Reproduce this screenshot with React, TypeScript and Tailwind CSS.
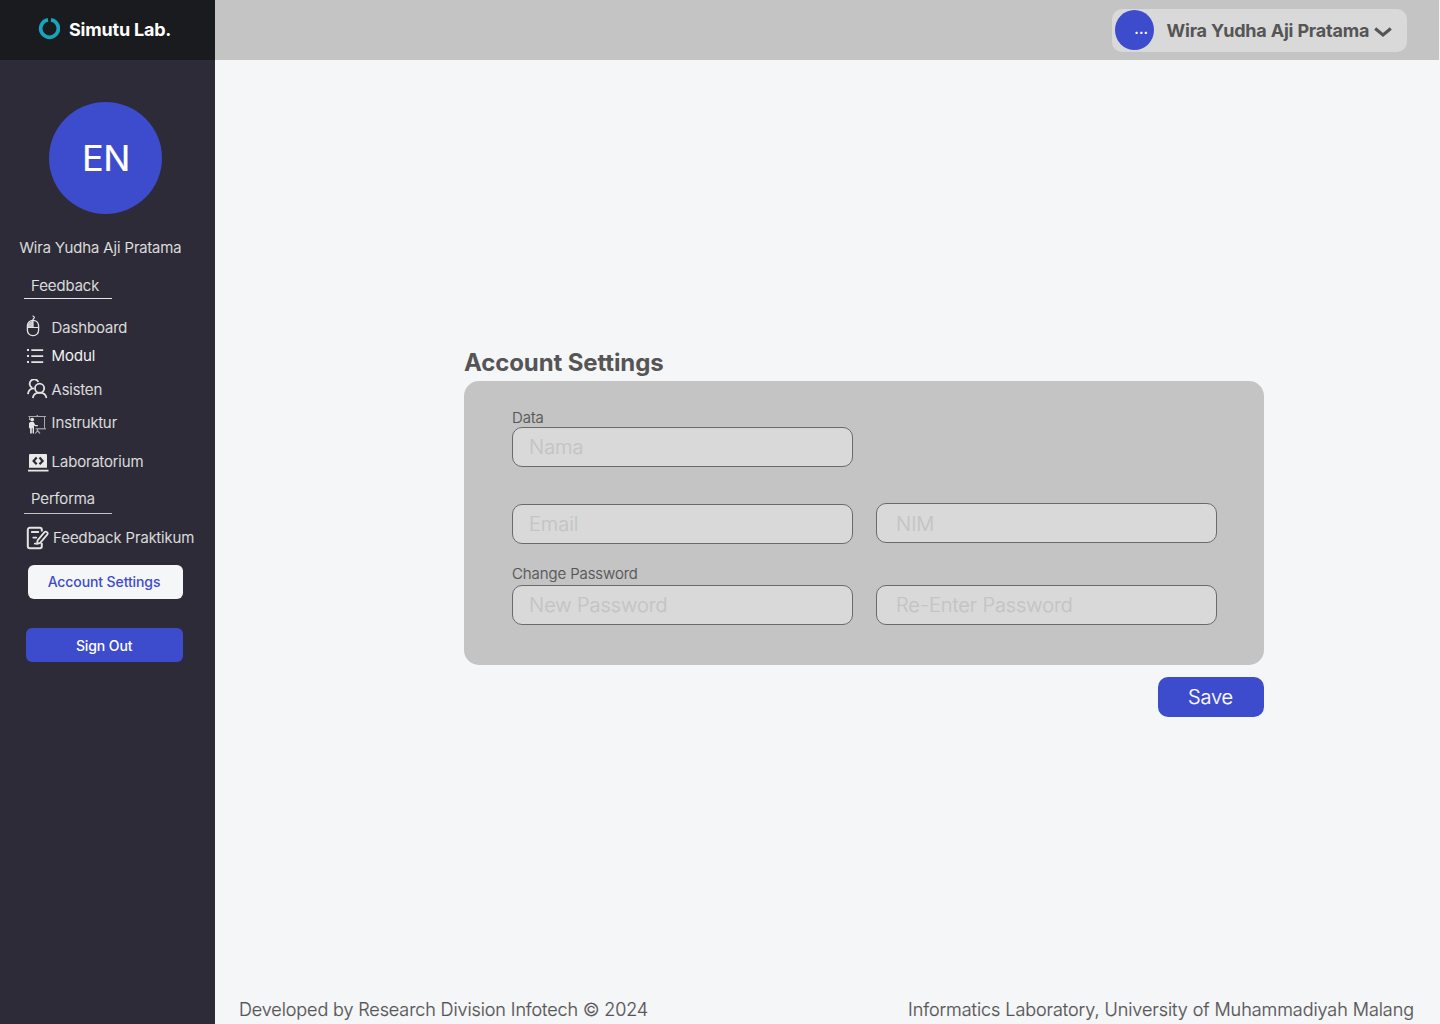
import type { ReactNode } from "react";

function LogoIcon() {
  return (
    <svg className="block h-[22px] w-[22px]" viewBox="0 0 22 22" fill="none">
      <path d="M12.500 2.060A8.800 8.800 0 1 1 9.500 2.060" transform="translate(.5 -.2)" stroke="#17a5bc" strokeWidth="3.700" />
    </svg>
  );
}

function MouseIcon() {
  return (
    <svg className="block h-[22px] w-[14px]" viewBox="0 0 14 22" fill="none" stroke="#e4e4e4">
      <path d="M1.500 11a5.500 5.200 0 0 1 5.500-5v6.500H1.500z" fill="#e4e4e4" fillOpacity=".85" stroke="none" />
      <rect x="1.400" y="5.300" width="11.200" height="15.400" rx="5.400" strokeWidth="1.300" />
      <path d="M1.400 12.500h11.200M7 5.500v7" strokeWidth="1.200" />
      <path d="M7 5.500V4.700c0-1.200 1.400-1 1.400-2.200C8.400 1.700 7.700 1.300 6.600 .7" strokeWidth="1.200" />
    </svg>
  );
}

function ListIcon() {
  return (
    <svg className="block h-[16px] w-[17px]" viewBox="0 0 17 16" fill="#e4e4e4">
      <path d="M0 1h2v2H0zM0 7h2v2H0zM0 13h2v2H0zM4.300 1.200H16.200V2.900H4.300zM4.300 7.200H16.200V8.900H4.300zM4.300 13.200H16.200V14.900H4.300z" />
    </svg>
  );
}

function PeopleIcon() {
  return (
    <svg className="block h-[20px] w-[21px]" viewBox="0 0 21 20" fill="none" stroke="#e4e4e4" strokeWidth="1.800">
      <circle cx="12.600" cy="9.300" r="4.600" />
      <path d="M5.800 19c.500-3.300 3.400-5.300 6.800-5.300s6.300 2 6.900 5.300" />
      <path d="M11.300 3A4.500 4.500 0 1 0 5.300 8.900" />
      <path d="M7 9.400C3.600 9.500 1.300 11.600.9 15.200" />
    </svg>
  );
}

function TeacherIcon() {
  return (
    <svg className="block h-[19px] w-[19px]" viewBox="0 0 19 19" fill="none" stroke="#a8a8ac">
      <path d="M.5 1.500H18M16.500 1.700V14M1.500 1.700V5" strokeWidth="1" />
      <path d="M7.500 13.800H18" strokeWidth="1.200" />
      <path d="M9.300 0v1.700" strokeWidth="1.500" />
      <path d="M9.500 14v1.500L7.300 18.500M9.500 15.500L12 18.500" strokeWidth="1.200" />
      <circle cx="4.200" cy="4.600" r="1.900" fill="#e4e4e4" stroke="none" />
      <path d="M2.100 7h3.500l1.700 2.900 2.500.2v1.200H7.100L6 10.500V18.500H4.600V13.300H3.800V18.500H2.100V13.200H1V8.200z" fill="#e4e4e4" stroke="none" />
    </svg>
  );
}

function LaptopIcon() {
  return (
    <svg className="block h-[19px] w-[21px]" viewBox="0 0 21 19">
      <path d="M1 2Q1 1 2 1H18Q19 1 19 2V14.700H1zM0 16.700H20.500V18.600H0z" fill="#e9e9e9" />
      <path d="M8.700 4.500L5.600 7.900l3.100 3.400M11.500 4.500l3.100 3.400-3.100 3.400" fill="none" stroke="#2c2b37" strokeWidth="2.200" />
    </svg>
  );
}

function NoteIcon() {
  return (
    <svg className="block h-[24px] w-[23px]" viewBox="0 0 23 24" fill="none" stroke="#e4e4e4" strokeWidth="2" strokeLinecap="round" strokeLinejoin="round">
      <g transform="translate(.8 .3)">
        <path d="M15 4.500V3.500A2 2 0 0 0 13 1.500H3A2 2 0 0 0 1 3.500V20A2 2 0 0 0 3 22H13A2 2 0 0 0 15 20V17.500" />
        <path d="M5 5.700H11.500M6.500 11.300H9.500M8 17.300H9" strokeWidth="1.800" />
        <path d="M10.800 14L17.700 5.900Q18.800 4.800 20.200 5.900Q21.500 7.100 20.400 8.300L13.400 16.500L10.200 17.600z" strokeWidth="1.800" />
      </g>
    </svg>
  );
}

function Item({ icon, label, className }: { icon: ReactNode; label: string; className: string }) {
  return (
    <a className={`flex h-5 items-center ${className}`}>
      <span className="flex w-[24.6px] shrink-0 items-center">{icon}</span>
      <span className="whitespace-nowrap">{label}</span>
    </a>
  );
}

function Field({ placeholder, className = "" }: { placeholder: string; className?: string }) {
  return (
    <input
      placeholder={placeholder}
      className={`block h-10 w-[341px] rounded-[10px] border border-[#6a6a6a] bg-[#d9d9d9] text-[20px] font-light leading-6 tracking-[-0.06px] outline-none [-webkit-text-stroke:0.2px] placeholder:text-[#c4c4c4] placeholder:opacity-100 ${className}`}
    />
  );
}

function Sidebar() {
  return (
    <aside className="flex w-[215px] shrink-0 flex-col bg-[#2c2b37] text-[15px] font-light leading-5 tracking-[-0.04px] text-[#e4e4e4] [-webkit-text-stroke:0.2px]">
      <div className="flex h-[60px] items-center bg-[#1a1b1e] pl-[38px] text-white [-webkit-text-stroke:0]">
        <span className="mb-[3px]"><LogoIcon /></span>
        <span className="ml-[9px] text-[18px] font-bold tracking-[-0.2px]">Simutu Lab.</span>
      </div>
      <div className="ml-[49.4px] mt-[42px] flex h-28 w-[113px] items-center justify-center rounded-[50%] bg-[#3d4bcd] text-[36px] font-normal tracking-[-0.5px] text-white">EN</div>
      <p className="ml-[19.4px] mt-6 whitespace-nowrap">Wira Yudha Aji Pratama</p>
      <h2 className="ml-6 mt-[17px] h-6 w-[88px] border-b border-[#e4e4e4] pl-[7px] pt-px">Feedback</h2>
      <nav className="flex flex-col pl-[27px]">
        <Item className="mt-[19px]" icon={<span className="-ml-[0.6px] mb-[5px]"><MouseIcon /></span>} label="Dashboard" />
        <Item className="mt-2 text-white" icon={<ListIcon />} label="Modul" />
        <Item className="mt-[14px]" icon={<span className="mb-[2px]"><PeopleIcon /></span>} label="Asisten" />
        <Item className="mt-[13px]" icon={<span className="ml-px mt-[3px]"><TeacherIcon /></span>} label="Instruktur" />
        <Item className="mt-[19px]" icon={<span className="ml-px"><LaptopIcon /></span>} label="Laboratorium" />
      </nav>
      <h2 className="ml-6 mt-4 h-[26px] w-[88px] border-b border-[#c4c4c8] pl-[7px] pt-px">Performa</h2>
      <a className="ml-[26px] mt-[14px] flex h-5 items-center gap-1 whitespace-nowrap tracking-normal">
        <NoteIcon />Feedback Praktikum
      </a>
      <button className="ml-7 mt-[17px] h-[34px] w-[155px] rounded-md bg-[#f5f6f8] pr-[3px] text-[14px] font-medium tracking-[-0.1px] text-[#3d4bcd] [-webkit-text-stroke:0]">Account Settings</button>
      <button className="ml-[26.400px] mt-[29px] h-[34px] w-[156.600px] rounded-md bg-[#3d4bcd] pr-px pt-px text-[14px] font-medium tracking-[-0.1px] text-white [-webkit-text-stroke:0]">Sign Out</button>
    </aside>
  );
}

export default function App() {
  return (
    <div className="flex h-[1024px] w-[1440px] overflow-hidden bg-[#f5f6f8] font-['Inter',sans-serif] text-[#555]">
      <Sidebar />
      <div className="flex flex-1 flex-col">
        <header className="mr-px flex h-[60px] items-center justify-end bg-[#c4c4c4] pr-8">
          <div className="flex h-[43px] w-[295px] items-center rounded-[10px] bg-[#d9d9d9] pl-[3px]">
            <span className="mb-px flex h-10 w-[39px] items-center justify-end rounded-[50%] bg-[#3d4bcd] pr-[6px] text-[15px] font-medium text-white">...</span>
            <span className="ml-[12.500px] whitespace-nowrap text-[18px] font-bold tracking-[-0.19px]">Wira Yudha Aji Pratama</span>
            <svg className="ml-[5px] mt-1 h-3 w-[18px]" viewBox="0 0 18 12" fill="none" stroke="#555" strokeWidth="3">
              <path d="M1.200 2.500L9 9L16.800 2.500" />
            </svg>
          </div>
        </header>
        <main className="ml-[249px] mt-[285px] w-[800px] flex-1">
          <h1 className="h-9 text-[24px] font-bold leading-[35px] tracking-[-0.12px]">Account Settings</h1>
          <form className="h-[284px] rounded-[15px] bg-[#c4c4c4] pl-12 pt-[27px]">
            <label className="block h-[19px] text-[15px] font-light leading-5 [-webkit-text-stroke:0.2px]">Data</label>
            <Field placeholder="Nama" className="pl-4" />
            <div className="mt-9 flex gap-[23px]">
              <Field placeholder="Email" className="mt-px pl-4" />
              <Field placeholder="NIM" className="pl-[19px] pt-[2px]" />
            </div>
            <label className="mt-[19px] block h-[22px] text-[15px] font-light leading-[22px] tracking-[-0.08px] [-webkit-text-stroke:0.2px]">Change Password</label>
            <div className="flex gap-[23px]">
              <Field placeholder="New Password" className="pl-4" />
              <Field placeholder="Re-Enter Password" className="pl-[19px]" />
            </div>
          </form>
          <div className="mt-3 flex justify-end">
            <button className="h-10 w-[106px] rounded-[10px] bg-[#3d4bcd] pr-px text-[20px] font-light tracking-[-0.1px] text-white [-webkit-text-stroke:0.2px]">Save</button>
          </div>
        </main>
        <footer className="flex h-7 items-center justify-between pb-[2px] pl-6 pr-[26px] text-[18px] font-light tracking-[-0.11px] [-webkit-text-stroke:0.2px]">
          <span>Developed by Research Division Infotech © 2024</span>
          <span className="tracking-[-0.06px]">Informatics Laboratory, University of Muhammadiyah Malang</span>
        </footer>
      </div>
    </div>
  );
}
